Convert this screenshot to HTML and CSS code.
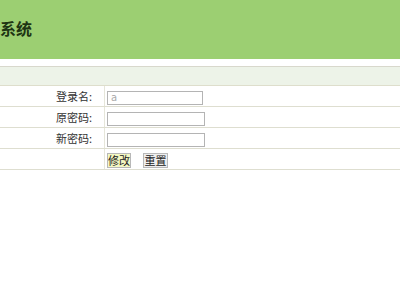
FILE: index.html
```html
<!DOCTYPE html>
<html>
<head>
<meta charset="utf-8">
<link rel="stylesheet" href="styles.css">
</head>
<body>
<div class="header"><h1 class="title">系统</h1></div>
<div class="gap"></div>
<table class="form">
  <tr class="caption"><td colspan="2"></td></tr>
  <tr><td class="label">登录名:</td><td class="field"><input class="inp inp-short" type="text" value="a" readonly></td></tr>
  <tr><td class="label">原密码:</td><td class="field"><input class="inp" type="password"></td></tr>
  <tr><td class="label">新密码:</td><td class="field"><input class="inp" type="password"></td></tr>
  <tr><td class="label"></td><td class="field"><span class="btns"><button class="btn btn-ok">修改</button><button class="btn btn-reset">重置</button></span></td></tr>
</table>
</body>
</html>
```
FILE: styles.css
```css
html, body { margin: 0; padding: 0; background: #fff; }
body { font-family: "Noto Sans CJK SC", "DejaVu Sans", sans-serif; font-size: 12px; color: #333; }
.header { height: 59px; background: #9ccf72; display: flex; align-items: center; }
.title { margin: 0 0 4px 0; font-size: 16px; font-weight: bold; color: #1e3513; line-height: 1; }
.gap { height: 7px; }
.form { width: 100%; border-collapse: collapse; }
.form td { border-top: 1px solid #deded0; border-bottom: 1px solid #deded0; padding: 0; height: 20px; }
.caption td { background: #edf3e8; height: 18px; border-top: 1px solid #d8d8cc; border-bottom: 1px solid #dedecc; }
.label { width: 92px; padding-right: 12px !important; text-align: right; border-right: 1px solid #e6e6da; font-size: 11px; line-height: 20px; }
.field { padding-left: 2px !important; }
.inp { box-sizing: border-box; width: 98px; height: 14px; border: 1px solid #b4b4b4; padding: 0 3px; margin: 0; font-size: 10px; color: #aaa; vertical-align: middle; font-family: "DejaVu Sans", sans-serif; }
.inp-short { width: 96px; }
.btns { display: inline-flex; gap: 12px; vertical-align: middle; }
.btn { box-sizing: border-box; height: 15px; padding: 0; margin: 0; border: 1px solid #b8b8b8; font-size: 11px; line-height: 13px; color: #222; white-space: nowrap; overflow: hidden; font-family: "Noto Sans CJK SC", sans-serif; }
.btn-ok { width: 24px; background: #f3f7c2; }
.btn-reset { width: 25px; background: #eeeeee; }
```
